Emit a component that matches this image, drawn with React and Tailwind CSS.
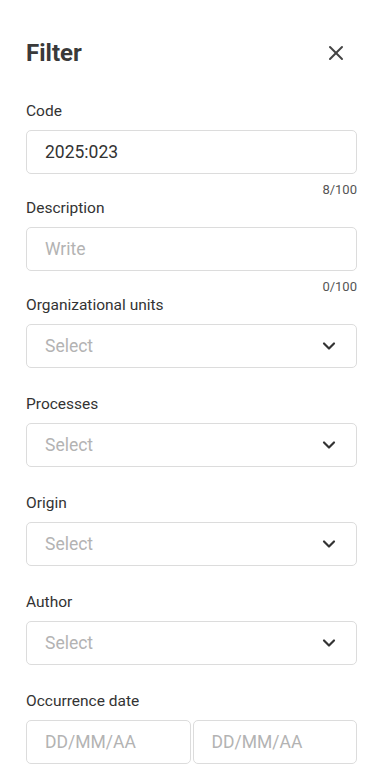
import React from 'react';
import { X, ChevronDown } from 'lucide-react';

const Label = ({ children }) => (
    <label className="block text-[15.5px] leading-5 text-[#333333] mb-[9px]">{children}</label>
);

const TextField = ({ label, value, placeholder, count }) => (
    <div>
        <Label>{label}</Label>
        <div className="h-[44px] border border-[#dcdcdc] rounded-[5px] flex items-center px-[18px] bg-white">
            {value ? (
                <span className="text-[17.5px] text-[#333333]">{value}</span>
            ) : (
                <span className="text-[17.5px] text-[#b3b3b3]">{placeholder}</span>
            )}
        </div>
        <p className="text-[13px] leading-4 text-right text-[#555555] mt-2">{count}/100</p>
    </div>
);

const SelectField = ({ label }) => (
    <div className="mb-[26px]">
        <Label>{label}</Label>
        <div className="h-[44px] border border-[#dcdcdc] rounded-[5px] flex items-center justify-between pl-[18px] pr-[20px] bg-white">
            <span className="text-[17.5px] text-[#b3b3b3]">Select</span>
            <ChevronDown size={20} strokeWidth={2.6} className="text-[#333333] -mr-[3px]" />
        </div>
    </div>
);

const App = () => {
    return (
        <div className="min-h-[767px] bg-white pl-[26px] pr-[28px] pt-[39px]" style={{ fontFamily: 'Roboto, "Liberation Sans", sans-serif' }}>
            {/* header */}
            <div className="flex items-center justify-between h-7 mb-[34px]">
                <h2 className="text-[24px] leading-7 font-bold text-[#3a3a3a]">Filter</h2>
                <X size={24} strokeWidth={2} className="text-[#444444] mr-[9px]" />
            </div>

            <TextField label="Code" value="2025:023" count={8} />
            <TextField label="Description" placeholder="Write" count={0} />

            <SelectField label="Organizational units" />
            <SelectField label="Processes" />
            <SelectField label="Origin" />
            <SelectField label="Author" />

            <div>
                <Label>Occurrence date</Label>
                <div className="grid grid-cols-2 gap-[2px]">
                    <div className="h-[44px] border border-[#dcdcdc] rounded-[5px] flex items-center px-[18px]">
                        <span className="text-[17.5px] text-[#b3b3b3]">DD/MM/AA</span>
                    </div>
                    <div className="h-[44px] border border-[#dcdcdc] rounded-[5px] flex items-center px-[18px]">
                        <span className="text-[17.5px] text-[#b3b3b3]">DD/MM/AA</span>
                    </div>
                </div>
            </div>
        </div>
    );
};

export default App;
